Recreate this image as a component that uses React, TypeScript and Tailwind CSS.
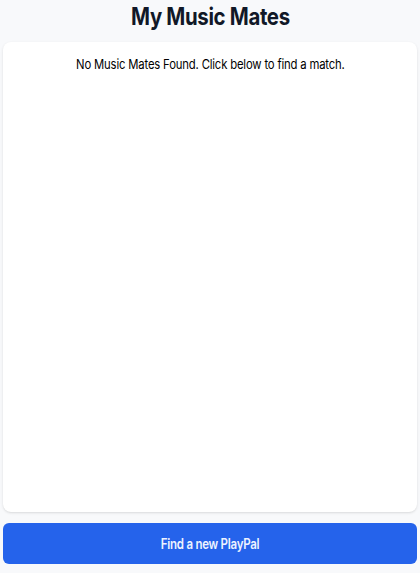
export default function App() {
  return (
    <div
      className="flex h-screen flex-col bg-[#f8f9fb] px-[3px] pb-[9px] text-[#111827]"
      style={{ fontFamily: "Inter, 'Liberation Sans', sans-serif" }}
    >
      <h1 className="pb-[8px] text-center text-2xl leading-[34px] font-bold">
        <span className="inline-block scale-x-85 tracking-[-0.4px]">My Music Mates</span>
      </h1>
      <div className="flex-1 rounded-lg bg-white px-4 pt-[12px] shadow">
        <p className="text-center text-[13px] leading-5 text-black">
          <span className="inline-block scale-x-87 tracking-[-0.2px]">
            No Music Mates Found. Click below to find a match.
          </span>
        </p>
      </div>
      <button className="mt-[11px] h-[41px] w-full rounded-md bg-[#2563eb] text-sm font-semibold text-[#eef3ff]">
        <span className="inline-block scale-x-82 tracking-[-0.3px]">Find a new PlayPal</span>
      </button>
    </div>
  );
}
